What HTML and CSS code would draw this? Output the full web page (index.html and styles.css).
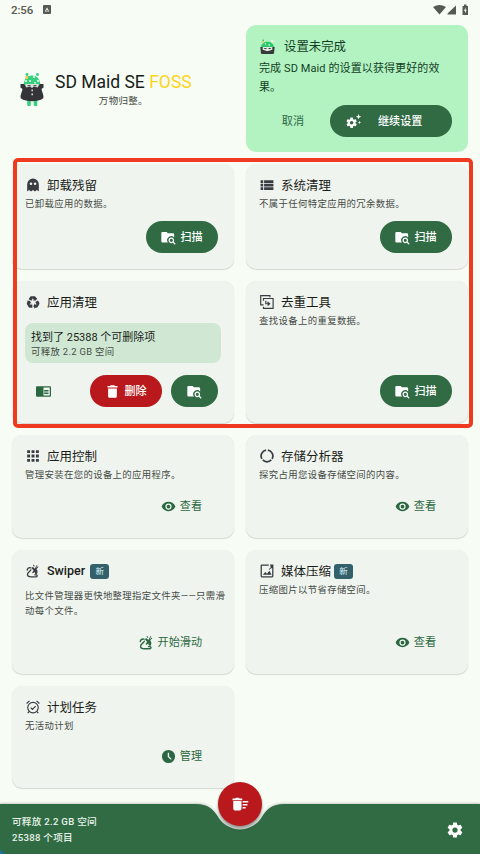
FILE: index.html
```html
<!DOCTYPE html>
<html lang="zh-CN">
<head>
<meta charset="utf-8">
<title>SD Maid SE</title>
<link rel="stylesheet" href="styles.css">
</head>
<body>
<svg class="defs" aria-hidden="true">
  <symbol id="scan" viewBox="0 0 24 24"><path d="M16.500 12a4.500 4.500 0 0 1 3.800 6.900l3.100 3.100-1.400 1.400-3.100-3.100A4.500 4.500 0 1 1 16.500 12m0 2a2.500 2.500 0 1 0 0 5 2.500 2.500 0 0 0 0-5M9 3l2 2h8a2 2 0 0 1 2 2v4.800A6.500 6.500 0 0 0 11 20H2.500A2 2 0 0 1 .5 18V5c0-1.100.9-2 2-2z"/></symbol>
  <symbol id="eye" viewBox="0 0 24 24"><path d="M12 9a3 3 0 1 0 0 6 3 3 0 0 0 0-6m0 8a5 5 0 1 1 0-10 5 5 0 0 1 0 10m0-12.500C7 4.500 2.730 7.610 1 12c1.730 4.390 6 7.500 11 7.500s9.270-3.110 11-7.500C21.270 7.610 17 4.500 12 4.500z"/></symbol>
  <symbol id="gear" viewBox="0 0 24 24"><path d="M12 15.500A3.500 3.500 0 0 1 8.500 12 3.500 3.500 0 0 1 12 8.500a3.500 3.500 0 0 1 3.500 3.500 3.500 3.500 0 0 1-3.500 3.500m7.430-2.530c.04-.32.07-.64.07-.97s-.03-.66-.07-1l2.110-1.630c.19-.15.24-.42.12-.64l-2-3.460c-.12-.22-.39-.31-.61-.22l-2.490 1c-.52-.39-1.060-.73-1.690-.98l-.37-2.650A.506.506 0 0 0 14 2h-4c-.25 0-.46.18-.5.42l-.37 2.650c-.63.25-1.170.59-1.690.98l-2.490-1c-.22-.09-.49 0-.61.22l-2 3.460c-.13.22-.07.49.12.64L4.570 11c-.04.34-.07.67-.07 1s.03.65.07.97l-2.110 1.660c-.19.15-.25.42-.12.64l2 3.460c.12.22.39.3.61.22l2.490-1.010c.52.4 1.060.74 1.690.99l.37 2.650c.04.24.25.42.5.42h4c.25 0 .46-.18.5-.42l.37-2.650c.63-.26 1.170-.59 1.690-.99l2.490 1.010c.22.08.49 0 .61-.22l2-3.460c.12-.22.07-.49-.12-.64z"/></symbol>
  <symbol id="swipe" viewBox="0 0 24 24"><path d="M8 6.500C5 6 2.500 8 2 10.500M8.500 10C7 13.500 2.500 14 2.500 18c0 3.500 3 4 6 4h8.500c2.500 0 3-2.500 1-3.500h-3" fill="none" stroke="currentColor" stroke-width="2.200" stroke-linecap="round"/><path d="M9 6.500 12 5l3 3 3.500-6.500 1 .5-2.500 5 3.500-3 .8 1-3.300 3.500c2.500 3 2 6.500.5 9l-3-1-.5-3-3.500 2.500-1-1.500 2.500-3.500z"/><path d="m13 1 2 3-1.500.8L12 2z"/></symbol>
</svg>
<div class="screen">
  <header class="status">
    <span>2:56</span>
    <svg class="debug" viewBox="0 0 8 9"><rect width="8" height="9" rx="1" fill="#555a54"/><path d="M1.800 6.500 4 2.200 6.200 6.500z" fill="#f7fcf4"/><circle cx="4" cy="5.500" r=".8" fill="#555a54"/></svg>
    <svg class="signals" viewBox="0 0 36 12"><path d="M0 3Q6.500-1 13 3L6.500 10.500zM14.500 10.500V9.500L23 1.500v9zM29.500 2h1.500V.5h2.500V2H35V11H29.500z" fill="#565a55"/><path d="M32.700 3.200v2.500h1L32 9.500V7h-1z" fill="#f7fcf4"/></svg>
  </header>
  <main class="grid">
    <section class="brand">
      <svg class="mascot" viewBox="0 0 24 34">
        <path d="M3.500 14C4 8 6 3.500 12 3.500S20 8 20.500 14z" fill="#35d07f"/><circle cx="7" cy="2.500" r="1.400" fill="#35d07f"/><circle cx="17.500" cy="2.500" r="1.400" fill="#35d07f"/>
        <path d="M5 8h2v2H5zM13 4h2v2h-2zM17 8h2v2h-2zM9 8h2v2H9zM14 10h2v1.500h-2z" fill="#c8f7d7"/><path d="M5.500 4h2.500v3H5.500z" fill="#f5c642"/>
        <path d="M5.500 12h13v4h-13z" fill="#dce3df"/><path d="M7.500 13h3v1.200h-3zM13.500 13h3v1.200h-3z" fill="#555"/>
        <path d="M9 27v5.500M15.500 27v5.500" stroke="#35d07f" stroke-width="3.600" stroke-linecap="round"/>
        <path d="M.5 12h3.500l2.500 3.500 3.500-1 2 1.500 2-1.500 3.500 1L20 12h3.500v3.500l-2 1.500c.5 3.500 3 7 1.500 9.500-5 3.500-17 3.500-22 0C-.5 24 2 20.500 2.500 17L.5 15.500z" fill="#343438"/><path d="M12.200 17.500v1.800M12.200 21.500v1.800" stroke="#e9eee9" stroke-width="1.400"/>
      </svg>
      <div class="brand-text"><h1>SD Maid SE <b>FOSS</b></h1><p>万物归整。</p></div>
    </section>
    <section class="setup">
      <h2><svg viewBox="0 0 14 14"><path d="M1 8C1 .8 13 .8 13 8z" fill="#28c96d"/><circle cx="3" cy="1.200" r=".8" fill="#28c96d"/><path d="M10.500 1h2v2h-2zM4.500 4h1.200v1.200H4.500zM8 5h1.200v1.200H8z" fill="#eefbe6"/><path d="M2 2h1.500v2H2z" fill="#e2d34a"/><path d="M.3 7.500h13.400l-.6 5.500q-.1.900-1 .900H1.900q-.9 0-1-.9z" fill="#37393a"/><path d="M2.500 7.500h9V10L7 11.500 2.500 10z" fill="#dfe9e2"/><path d="M4 8.500h2v.8H4zM8 8.500h2v.8H8z" fill="#37393a"/></svg>设置未完成</h2>
      <p>完成 SD Maid 的设置以获得更好的效果。</p>
      <div class="actions"><button class="cancel">取消</button><button class="filled continue"><svg viewBox="0 0 24 24"><use href="#gear" x="-1" y="4" width="20" height="20"/><path d="m20 0 1.200 3 3 1.200-3 1.200L20 8.500l-1.200-3.100-3-1.200 3-1.200zM21.500 11l.8 1.700 1.700.8-1.700.8-.8 1.700-.8-1.700-1.700-.8 1.700-.8z"/></svg><span>继续设置</span></button></div>
    </section>

    <section class="card">
      <h2><svg viewBox="0 0 24 24"><path fill-rule="evenodd" d="M12 1a10 10 0 0 0-10 10v12l3.300-2.500L8.700 23l3.300-2.500 3.300 2.500 3.400-2.500L22 23V11A10 10 0 0 0 12 1M8.500 7.500a2.200 2.200 0 1 1 0 4.500 2.200 2.200 0 0 1 0-4.500m7 0a2.200 2.200 0 1 1 0 4.500 2.200 2.200 0 0 1 0-4.500"/></svg>卸载残留</h2>
      <p>已卸载应用的数据。</p>
      <div class="actions"><button class="filled"><svg><use href="#scan"/></svg>扫描</button></div>
    </section>
    <section class="card">
      <h2><svg viewBox="0 0 24 24"><path d="M1 14.500h4.500v-4.500H1zm0 6h4.500V16H1zM1 8.500h4.500V4H1zm6 6h16v-4.500H7zm0 6h16V16H7zM7 4v4.500h16V4z"/></svg>系统清理</h2>
      <p>不属于任何特定应用的冗余数据。</p>
      <div class="actions"><button class="filled"><svg><use href="#scan"/></svg>扫描</button></div>
    </section>

    <section class="card">
      <h2><svg viewBox="1 1 22 22"><path d="M21.820 15.420l-2.500 4.330c-.49.860-1.400 1.310-2.320 1.250h-2v2l-2.500-4.500L15 14v2h2.820l-2.220-3.850 4.330-2.500 1.800 3.120c.52.770.59 1.800.09 2.650M9.210 3.060h5c.98 0 1.830.57 2.240 1.390l1 1.740 1.730-1-2.640 4.410-5.150.09 1.730-1-1.410-2.450-2.210 3.850-4.340-2.500 1.800-3.120c.41-.83 1.260-1.410 2.250-1.410M5.050 19.760l-2.500-4.330c-.49-.85-.42-1.870.09-2.640l1-1.730-1.730-1 5.140.08 2.650 4.420-1.730-1L6.560 16H11v5H7.400c-.93.070-1.850-.39-2.350-1.240z"/></svg>应用清理</h2>
      <div class="result"><strong>找到了 25388 个可删除项</strong><span>可释放 2.2 GB 空间</span></div>
      <div class="actions"><button class="text details"><svg viewBox="0 0 24 24"><path d="M13 12h7v1.500h-7zm0-2.500h7V11h-7zm0 5h7V16h-7zM22 3.500H2c-1.100 0-2 .9-2 2v13c0 1.100.9 2 2 2h20c1.100 0 2-.9 2-2v-13c0-1.100-.9-2-2-2zm0 15H12v-13h10z"/></svg></button><button class="filled danger"><svg viewBox="0 0 24 24"><path d="M5 19c0 1.500.9 3 2 3h10c1.100 0 2-1.500 2-3V7H5zM20 3h-4l-1-1H9L8 3H4v2.500h16z"/></svg>删除</button><button class="filled compact"><svg><use href="#scan"/></svg></button></div>
    </section>
    <section class="card">
      <h2><svg class="outline" viewBox="0 0 24 24"><path d="M6 17H1.200V1H17v3"/><path d="M6 10V6h16.500v17H6v-3"/><path d="M10 10v5h6M13 12l3.500 3-3.500 3"/></svg>去重工具</h2>
      <p>查找设备上的重复数据。</p>
      <div class="actions"><button class="filled"><svg><use href="#scan"/></svg>扫描</button></div>
    </section>

    <section class="card">
      <h2><svg viewBox="0 0 24 24"><path d="M2 2h5v5H2zM9.500 2h5v5h-5zM17 2h5v5h-5zM2 9.500h5v5H2zM9.500 9.500h5v5h-5zM17 9.500h5v5h-5zM2 17h5v5H2zM9.500 17h5v5h-5zM17 17h5v5h-5z"/></svg>应用控制</h2>
      <p>管理安装在您的设备上的应用程序。</p>
      <div class="actions"><button class="text"><svg><use href="#eye"/></svg>查看</button></div>
    </section>
    <section class="card">
      <h2><svg class="outline ring" viewBox="0 0 24 24"><path d="M13.500 2.100a10 10 0 0 1 7.300 14.700M19.300 18.800a10 10 0 0 1-14.600 0M3.200 16.800A10 10 0 0 1 10.500 2.100"/></svg>存储分析器</h2>
      <p>探究占用您设备存储空间的内容。</p>
      <div class="actions"><button class="text"><svg><use href="#eye"/></svg>查看</button></div>
    </section>

    <section class="card swiper">
      <h2><svg><use href="#swipe"/></svg><span class="latin">Swiper</span><em>新</em></h2>
      <p>比文件管理器更快地整理指定文件夹——只需滑动每个文件。</p>
      <div class="actions"><button class="text"><svg><use href="#swipe"/></svg>开始滑动</button></div>
    </section>
    <section class="card media">
      <h2><svg viewBox="0 0 24 24"><path d="M23 9v12a2 2 0 0 1-2 2H3a2 2 0 0 1-2-2V3a2 2 0 0 1 2-2h12v2.200H3.200v17.600h17.600V9z"/><path d="m5 18.500 4-5 3 3 4-5 4 7zM17 1h6v9l-3.500-3-3.500 3-1-1 3.500-3.500z"/></svg>媒体压缩<em>新</em></h2>
      <p>压缩图片以节省存储空间。</p>
      <div class="actions"><button class="text"><svg><use href="#eye"/></svg>查看</button></div>
    </section>

    <section class="card">
      <h2><svg class="outline" viewBox="0 0 24 24"><circle cx="12" cy="13" r="9"/><path d="m1 6 5-4.500M23 6l-5-4.500M8 13l3 3 5.500-5.500M5 20l-2 2.500M19 20l2 2.500"/></svg>计划任务</h2>
      <p>无活动计划</p>
      <div class="actions"><button class="text"><svg viewBox="0 0 24 24"><path fill-rule="evenodd" d="M12 1.500a10.500 10.500 0 1 0 0 21 10.500 10.500 0 0 0 0-21M10.800 6h2.200v6l4.200 3.800-1.400 1.500-5-4.600z"/></svg>管理</button></div>
    </section>
  </main>
  <footer class="bottom">
    <svg class="bar-shape" viewBox="0 0 480 50"><path d="M0 0H196C208 0 213 5 217.500 12A25.600 25.600 0 0 0 262.500 12C267 5 272 0 284 0H480V50H0z" fill="#306b44"/><path d="M0 45.500Q1.500 49 5 50H0z" fill="#1971ae"/></svg>
    <div class="totals"><div>可释放 2.2 GB 空间</div><div>25388 个项目</div></div>
    <svg class="settings"><use href="#gear"/></svg>
    <button class="fab"><svg viewBox="0 0 24 24"><path d="M15.500 16h4v2h-4zm0-8H23v2h-7.500zm0 4H22v2h-6.500zM3 18c0 1.500.9 2.500 2 2.500h7c1.100 0 2-1 2-2.500V8H3zM15 4.500h-3.500l-1-1h-4l-1 1H2V7h13z"/></svg></button>
  </footer>
  <div class="highlight"></div>
</div>
</body>
</html>
```
FILE: styles.css
```css
* { box-sizing: border-box; }
body { margin: 0; background: #f7fcf4; font-family: Roboto, "Noto Sans CJK SC", sans-serif; color: #191d1a; }
h1, h2, p { margin: 0; font-weight: 400; }
svg { display: block; flex: none; fill: currentColor; }
button { display: flex; align-items: center; justify-content: center; border: 0; padding: 2px 0 0; background: none; font: 400 11.1px/16px Roboto, "Noto Sans CJK SC", sans-serif; color: #2b6841; white-space: nowrap; }
button svg { margin-top: -2px; }
.defs { position: absolute; width: 0; height: 0; }
.screen { position: relative; width: 480px; height: 854px; overflow: hidden; display: flex; flex-direction: column; }
.status { height: 25px; flex: none; display: flex; align-items: center; padding: 0 11px 6px; font-size: 11.5px; font-weight: 500; color: #565a55; letter-spacing: -.1px; }
.debug { width: 8px; height: 9px; margin-left: 10px; }
.signals { width: 36px; height: 12px; margin-left: auto; }
.grid { flex: none; height: 779px; padding: 0 12px; display: grid; grid-template-columns: 222px 222px; grid-template-rows: 127px 105px 142px 103px 124px 102px; gap: 12px; align-content: start; }
.brand { display: flex; align-items: center; padding-left: 8px; gap: 11px; }
.mascot { width: 24px; height: 34px; }
.brand-text { text-align: center; padding-top: 1px; }
.brand h1 { font-size: 17.5px; line-height: 20px; white-space: nowrap; }
.brand b { font-weight: 400; color: #fbd51b; }
.brand p { font-size: 9.5px; line-height: 13px; letter-spacing: .3px; color: #414942; padding-top: 2px; }
.setup, .card { border-radius: 10px; display: flex; flex-direction: column; }
.setup { background: #b3f2c1; padding: 12px 16px 15px 13px; color: #123f25; }
.setup h2 { display: flex; align-items: center; gap: 9px; font-size: 12.4px; line-height: 18px; height: 18px; padding: 2px 0 0 1px; }
.setup h2 svg { width: 15px; height: 15px; margin-top: -1px; }
.setup p { font-size: 11px; line-height: 19px; letter-spacing: .1px; padding-top: 4px; }
.actions { margin-top: auto; display: flex; justify-content: flex-end; align-items: center; }
.filled { background: #306b44; color: #fff; font-weight: 500; border-radius: 16px; width: 72px; height: 32px; gap: 4px; }
.filled svg, .text svg { width: 15px; height: 15px; }
.cancel { margin-right: 26px; }
.continue { width: 122px; justify-content: flex-start; padding-left: 16px; gap: 17px; }
.card { background: #f0f4ee; padding: 13px 16px 16px 13px; box-shadow: 0 1px 1px rgba(0,0,0,.14), 0 0 1px rgba(0,0,0,.06); }
.card h2 { display: flex; align-items: center; font-size: 12.5px; line-height: 16px; height: 16px; padding-top: 2px; white-space: nowrap; }
.card h2 svg { width: 14px; height: 14px; margin: -2px 7px 0 1px; color: #3a3c43; }
.outline { fill: none; stroke: currentColor; stroke-width: 2; }
.ring { stroke-width: 3; }
.card p { font-size: 9.4px; line-height: 15px; letter-spacing: .36px; color: #454b46; padding-top: 3px; }
.text { padding-right: 16px; height: 32px; gap: 4px; }
.latin { font-weight: 500; margin-top: -2px; }
.card em { font: 400 8.5px/15px Roboto, "Noto Sans CJK SC", sans-serif; background: #34606b; color: #d6f0f8; border-radius: 3px; width: 19px; height: 15px; text-align: center; margin: -2px 0 0 3px; }
.swiper .latin + em { margin-left: 5px; }
.swiper p { margin-right: -14px; padding-top: 9px; }
.result { margin-top: 13px; height: 40px; width: 196px; flex: none; background: #d0e8d3; border-radius: 8px; padding: 7px 6px 6px; display: flex; flex-direction: column; }
.result strong { font-weight: 400; font-size: 11px; line-height: 15px; }
.result span { font-size: 9.4px; line-height: 13px; letter-spacing: .34px; color: #454b46; }
.actions .details { margin-right: auto; padding: 2px 0 0 11px; }
.danger { background: #b9191c; }
.compact { width: 47px; margin-left: 9px; }
.bottom { position: relative; height: 50px; flex: none; display: flex; justify-content: space-between; align-items: center; padding: 1px 16px 0 12px; color: #fff; }
.bar-shape { position: absolute; left: 0; top: 0; width: 480px; height: 50px; filter: drop-shadow(0 -1px 1px rgba(0,0,0,.18)); }
.totals { position: relative; font-size: 9.6px; line-height: 15.5px; letter-spacing: .28px; font-weight: 500; color: #e7f3e9; }
.settings { position: relative; width: 18px; height: 18px; }
.fab { position: absolute; left: 218px; top: -22px; width: 44px; height: 44px; border-radius: 50%; background: #b9191c; color: #fff; box-shadow: 0 3px 3px rgba(0,0,0,.3), 0 1px 2px rgba(0,0,0,.2); }
.fab svg { width: 18px; height: 18px; }
.highlight { position: absolute; left: 13px; top: 158px; width: 460px; height: 270px; border: 4px solid #ef3a1f; border-radius: 5px; pointer-events: none; }
```
